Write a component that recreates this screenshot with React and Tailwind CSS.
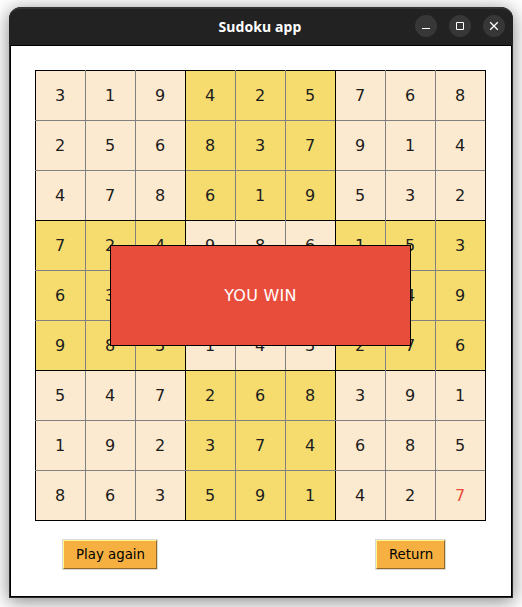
import React from "react";

const ROWS = [
  "319425768",
  "256837914",
  "478619532",
  "724986153",
  "635127849",
  "983143276",
  "547268391",
  "192374685",
  "863591427",
];

function Cell({ digit, row, col }) {
  const boxOdd = (Math.floor(row / 3) + Math.floor(col / 3)) % 2 === 1;
  const bg = boxOdd ? "bg-[#f6dc6f]" : "bg-[#fcead0]";
  const left = "border-l " + (col % 3 === 0 ? "border-l-black" : "border-l-[#808080]");
  const top = "border-t " + (row % 3 === 0 ? "border-t-black" : "border-t-[#808080]");
  // Above the diagonal the vertical rule covers the crossing; elsewhere the horizontal one does.
  const verticalWins = col > row;
  const ink = row === 8 && col === 8 ? "text-[#e84d3c]" : "text-[#1c1c1c]";
  return (
    <div className={`size-[50px] ${bg} ${verticalWins ? left : top}`}>
      <div className={`flex size-full items-center justify-center pr-px ${verticalWins ? top : left} ${ink}`}>
        {digit}
      </div>
    </div>
  );
}

function WindowButton({ children }) {
  return (
    <div className="flex size-[22px] items-center justify-center rounded-full bg-[#373737]">
      <svg width="10" height="10" viewBox="0 0 10 10" fill="none" stroke="#fff">
        {children}
      </svg>
    </div>
  );
}

function GameButton({ children, width }) {
  return (
    <button className={`h-[31px] border border-[#d9d9d9] text-[13.33px] text-black ${width}`}>
      <span className="flex size-full items-center justify-center whitespace-nowrap border border-t-[#fff78d] border-l-[#fff78d] border-r-[#936927] border-b-[#936927] bg-[#f5b041] pt-px pl-px">
        {children}
      </span>
    </button>
  );
}

export default function App() {
  return (
    <div className="h-[607px] w-[522px] overflow-hidden bg-white pt-[7px] pl-[9px] font-['DejaVu_Sans',sans-serif]">
      <div className="flex h-[591px] w-[504px] flex-col rounded-t-[12px] bg-[#2b2b2b] shadow-[0_3px_18px_1px_rgba(0,0,0,0.45)]">
        <header className="grid h-[38px] shrink-0 grid-cols-[1fr_auto_1fr] items-center rounded-t-[12px] border-t-2 border-[#343434] bg-[#222] pb-[2px]">
          <span />
          <h1 className="pt-px pr-[2px] font-['Noto_Sans',sans-serif] text-[14px] leading-none font-bold tracking-[0.1px] text-white">Sudoku app</h1>
          <div className="flex justify-end gap-3 pr-2">
            <WindowButton>
              <path d="M1 7.5H9" />
            </WindowButton>
            <WindowButton>
              <path d="M1.5 1.5H8.5V8.5H1.5Z" />
            </WindowButton>
            <WindowButton>
              <path d="M1.2 1.2L8.8 8.8M8.8 1.2L1.2 8.8" strokeWidth="1.3" />
            </WindowButton>
          </div>
        </header>
        <main className="mx-px mb-px grow border border-black bg-white pt-[24px] pl-[24px]">
          <div className="relative w-[451px] border-r border-b border-black">
            <div className="grid grid-cols-9 text-[16px] leading-none">
              {ROWS.map((line, row) =>
                [...line].map((digit, col) => (
                  <Cell key={`${row}-${col}`} digit={digit} row={row} col={col} />
                ))
              )}
            </div>
            <div className="absolute top-[175px] left-[75px] flex h-[101px] w-[301px] items-center justify-center border border-black bg-[#e84d3c] text-[16px] tracking-[0.25px] text-white">
              YOU WIN
            </div>
          </div>
          <div className="mt-[18px] ml-[27px] flex w-[384px] justify-between">
            <GameButton width="w-[96px]">Play again</GameButton>
            <GameButton width="w-[71px]">Return</GameButton>
          </div>
        </main>
      </div>
    </div>
  );
}
